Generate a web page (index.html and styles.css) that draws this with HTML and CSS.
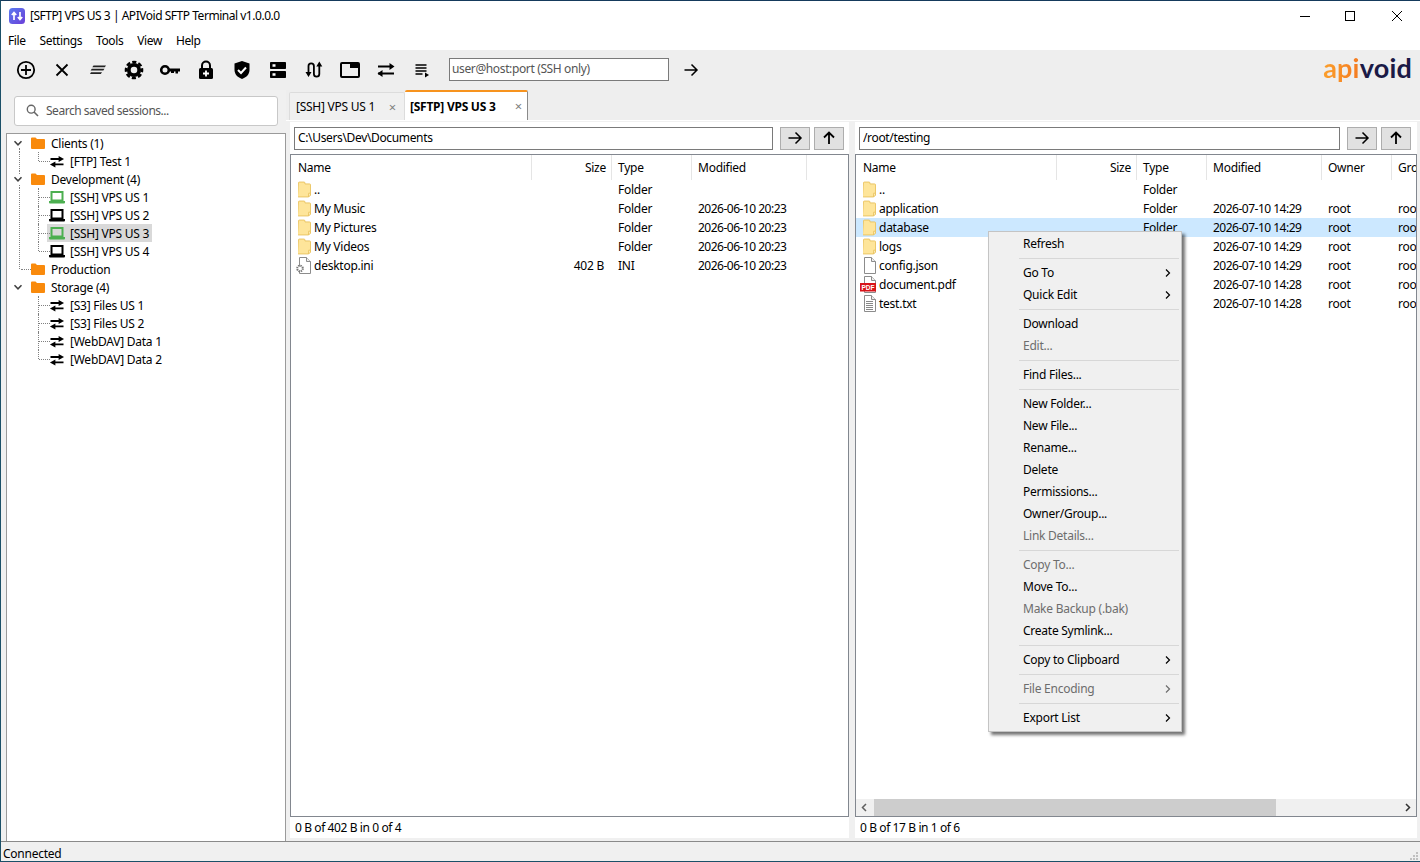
FILE: index.html
```html
<!DOCTYPE html>
<html lang="en">
<head>
    <meta charset="UTF-8">
    <title>[SFTP] VPS US 3 | APIVoid SFTP Terminal v1.0.0.0</title>
    <link rel="stylesheet" href="styles.css">
</head>
<body>
<svg class="sprite" width="0" height="0">
    <symbol id="folder" viewBox="0 0 14 12"><path d="M0 1.500Q0 .5 1 .5h3.500L6 2h7q1 0 1 1v8q0 1-1 1H1q-1 0-1-1z" fill="#f98a0c"/></symbol>
    <symbol id="swap" viewBox="0 0 14 12"><path d="M1 3.700h8M13 8.700H5" stroke="#000" stroke-width="1.700"/><path d="M8.500 .9l5 2.800-5 2.800zM5.500 5.900.5 8.700l5 2.800z"/></symbol>
    <symbol id="laptop" viewBox="0 0 16 13"><path d="M2.500 1h11v8.500h-11z" fill="none" stroke="currentColor" stroke-width="2"/><path d="M0 10h16v1.500q0 1-1 1H1q-1 0-1-1z" fill="currentColor"/></symbol>
    <symbol id="chev" viewBox="0 0 10 10"><path d="M1.500 3.200 5 6.800l3.500-3.600" fill="none" stroke="#404040" stroke-width="1.500"/></symbol>
    <symbol id="dir" viewBox="0 0 14 17"><path d="M.5 1.500q0-1 1-1h5q1 0 1 1v1h5q1 0 1 1v11h-2v2h-11q-1 0-1-1z" fill="#fee59a" stroke="#e9c35f"/><path d="M11.500 16.500v-4h2v2z" fill="#fff3c8" stroke="#e9c35f"/></symbol>
    <symbol id="page" viewBox="0 0 13 17"><path d="M1.500.5h7l4 4v12h-11z" fill="#fff" stroke="#8c8c8c"/><path d="M8.500.5v4h4" fill="#eee" stroke="#8c8c8c"/></symbol>
    <symbol id="right" viewBox="0 0 16 16"><path d="M1.500 8h12M8.500 2.500 14 8l-5.500 5.500" fill="none" stroke="currentColor" stroke-width="1.500"/></symbol>
    <symbol id="up" viewBox="0 0 16 16"><path d="M8 14V2.500M3 7.500 8 2.500l5 5" fill="none" stroke="currentColor" stroke-width="1.800"/></symbol>
    <symbol id="more" viewBox="0 0 6 10"><path d="M1 1.500 4.500 5 1 8.500" fill="none" stroke="currentColor" stroke-width="1.200"/></symbol>
</svg>

<div class="window">
    <div class="titlebar">
        <svg class="app-icon" width="16" height="16" viewBox="0 0 16 16"><defs><linearGradient id="appbg" x1="0" y1="0" x2="1" y2="1"><stop offset="0" stop-color="#5a7bf0"/><stop offset="1" stop-color="#6a3fd8"/></linearGradient></defs><rect width="16" height="16" rx="3.500" fill="url(#appbg)"/><path d="M5 12V5M2.800 7 5 4.500 7.200 7M11 4v7M8.800 9 11 11.500 13.200 9" fill="none" stroke="#fff" stroke-width="1.700"/></svg>
        <span class="title">[SFTP] VPS US 3 | APIVoid SFTP Terminal v1.0.0.0</span>
        <div class="winbtns">
            <svg width="46" height="30" viewBox="0 0 46 30"><path d="M18 15.500h10" stroke="#000"/></svg>
            <svg width="46" height="30" viewBox="0 0 46 30"><rect x="17.500" y="10.500" width="9" height="9" fill="none" stroke="#000"/></svg>
            <svg width="46" height="30" viewBox="0 0 46 30"><path d="M18 10l10 10M28 10 18 20" stroke="#000"/></svg>
        </div>
    </div>
    <div class="menubar">
        <span>File</span><span>Settings</span><span>Tools</span><span>View</span><span>Help</span>
    </div>
    <div class="toolbar">
        <button class="tool"><svg width="20" height="20" viewBox="0 0 20 20"><circle cx="10" cy="10" r="8.200" fill="none" stroke="#000" stroke-width="1.800"/><path d="M10 5v10M5 10h10" stroke="#000" stroke-width="1.800"/></svg></button>
        <button class="tool"><svg width="20" height="20" viewBox="0 0 20 20"><path d="M4.500 4.500l11 11M15.500 4.500l-11 11" stroke="#000" stroke-width="1.800"/></svg></button>
        <button class="tool"><svg width="20" height="20" viewBox="0 0 20 20"><path d="M5.500 5.500H18l-1.200 1.800H4.300zM3.800 8.800H16.500l-1.200 1.800H2.600zM3 12.200h11l-1.200 1.800H2z" fill="#222"/></svg></button>
        <button class="tool"><svg width="20" height="20" viewBox="0 0 20 20"><circle cx="10" cy="10" r="5.200" fill="none" stroke="#000" stroke-width="3.800"/><circle cx="10" cy="10" r="8" fill="none" stroke="#000" stroke-width="2.600" stroke-dasharray="4.100 2.180" stroke-dashoffset="2"/></svg></button>
        <button class="tool"><svg width="22" height="20" viewBox="0 0 22 20"><circle cx="6" cy="10" r="3.800" fill="none" stroke="#000" stroke-width="2.600"/><path d="M9 8.500h12v3h-2v2h-2.500v-2h-1.500v1.500H12v-1.500H9z"/></svg></button>
        <button class="tool"><svg width="20" height="20" viewBox="0 0 20 20"><path d="M6 9V5.500a4 4 0 0 1 8 0V9" fill="none" stroke="#000" stroke-width="2"/><rect x="3" y="8" width="14" height="11" rx="1.500"/><path d="M10 10.500v6M7 13.500h6" stroke="#fff" stroke-width="1.800"/></svg></button>
        <button class="tool"><svg width="20" height="20" viewBox="0 0 20 20"><path d="M10 1l7.500 2.500V10c0 4.500-3.500 7.500-7.500 9-4-1.500-7.500-4.500-7.500-9V3.500z"/><path d="M6 10l3 3 5-5.500" fill="none" stroke="#fff" stroke-width="2"/></svg></button>
        <button class="tool"><svg width="20" height="20" viewBox="0 0 20 20"><rect x="2" y="2" width="16" height="7" rx=".8"/><rect x="2" y="11" width="16" height="7" rx=".8"/><path d="M4.500 4.300h3v2.400h-3zM4.500 13.300h3v2.400h-3z" fill="#fff"/></svg></button>
        <button class="tool"><svg width="20" height="20" viewBox="0 0 20 20"><path d="M4.500 13V6a2.700 2.700 0 0 1 5.400 0v8a2.700 2.700 0 0 0 5.400 0V6" fill="none" stroke="#000" stroke-width="1.800"/><path d="M1.500 12h6l-3 5zM12.300 6.500h6l-3-5z"/></svg></button>
        <button class="tool"><svg width="22" height="20" viewBox="0 0 22 20"><rect x="2" y="3" width="18" height="14" rx="1" fill="none" stroke="#000" stroke-width="2"/><path d="M11 3h9v5h-9z"/></svg></button>
        <button class="tool"><svg width="20" height="20" viewBox="0 0 20 20"><path d="M2 6.500h13M2 13.500h16" stroke="#000" stroke-width="2"/><path d="M13.500 3l5 3.500-5 3.500zM6.500 10l-5 3.500 5 3.500z"/></svg></button>
        <button class="tool"><svg width="20" height="20" viewBox="0 0 20 20"><path d="M3.500 5h11M3.500 8h11M3.500 11h11M3.500 14h7" stroke="#000" stroke-width="1.600"/><path d="M13 12.500l4 2.500-4 2.500z"/></svg></button>
        <input class="quick" type="text" value="user@host:port (SSH only)">
        <button class="go"><svg width="16" height="16"><use href="#right"/></svg></button>
        <div class="logo"><span class="logo-api">api</span><span class="logo-void">void</span></div>
    </div>

    <div class="main">
        <div class="sidebar">
            <div class="search">
                <svg width="13" height="13" viewBox="0 0 13 13"><circle cx="5.200" cy="5.200" r="3.900" fill="none" stroke="#666" stroke-width="1.400"/><path d="M8 8l4 4" stroke="#666" stroke-width="1.600"/></svg>
                <span>Search saved sessions...</span>
            </div>
            <div class="tree">
                <div class="node root first"><svg class="twist"><use href="#chev"/></svg><svg class="fold"><use href="#folder"/></svg><span>Clients (1)</span></div>
                <div class="node child pass last"><svg class="leaf"><use href="#swap"/></svg><span>[FTP] Test 1</span></div>
                <div class="node root"><svg class="twist"><use href="#chev"/></svg><svg class="fold"><use href="#folder"/></svg><span>Development (4)</span></div>
                <div class="node child pass"><svg class="leaf green"><use href="#laptop"/></svg><span>[SSH] VPS US 1</span></div>
                <div class="node child pass"><svg class="leaf"><use href="#laptop"/></svg><span>[SSH] VPS US 2</span></div>
                <div class="node child pass"><span class="picked"></span><svg class="leaf green"><use href="#laptop"/></svg><span>[SSH] VPS US 3</span></div>
                <div class="node child pass last"><svg class="leaf"><use href="#laptop"/></svg><span>[SSH] VPS US 4</span></div>
                <div class="node root flat"><svg class="fold"><use href="#folder"/></svg><span>Production</span></div>
                <div class="node root end"><svg class="twist"><use href="#chev"/></svg><svg class="fold"><use href="#folder"/></svg><span>Storage (4)</span></div>
                <div class="node child"><svg class="leaf"><use href="#swap"/></svg><span>[S3] Files US 1</span></div>
                <div class="node child"><svg class="leaf"><use href="#swap"/></svg><span>[S3] Files US 2</span></div>
                <div class="node child"><svg class="leaf"><use href="#swap"/></svg><span>[WebDAV] Data 1</span></div>
                <div class="node child last"><svg class="leaf"><use href="#swap"/></svg><span>[WebDAV] Data 2</span></div>
            </div>
        </div>

        <div class="content">
            <div class="tabs">
                <div class="tab"><span>[SSH] VPS US 1</span><i>×</i></div>
                <div class="tab active"><span>[SFTP] VPS US 3</span><i>×</i></div>
            </div>
            <div class="panes">
                <div class="pane local">
                    <div class="pathbar">
                        <input class="path" type="text" value="C:\Users\Dev\Documents">
                        <button class="navbtn"><svg width="16" height="16"><use href="#right"/></svg></button>
                        <button class="navbtn"><svg width="16" height="16"><use href="#up"/></svg></button>
                    </div>
                    <div class="list">
                        <div class="scroll">
                            <div class="row head"><span>Name</span><span class="num">Size</span><span>Type</span><span>Modified</span></div>
                            <div class="row"><span class="name"><svg class="ico"><use href="#dir"/></svg>..</span><span></span><span>Folder</span><span></span></div>
                            <div class="row"><span class="name"><svg class="ico"><use href="#dir"/></svg>My Music</span><span></span><span>Folder</span><span>2026-06-10 20:23</span></div>
                            <div class="row"><span class="name"><svg class="ico"><use href="#dir"/></svg>My Pictures</span><span></span><span>Folder</span><span>2026-06-10 20:23</span></div>
                            <div class="row"><span class="name"><svg class="ico"><use href="#dir"/></svg>My Videos</span><span></span><span>Folder</span><span>2026-06-10 20:23</span></div>
                            <div class="row"><span class="name"><svg class="ico wide" viewBox="0 0 16 17"><use href="#page" width="13" height="17" x="3"/><circle cx="5" cy="11.500" r="2.800" fill="#fff" stroke="#777" stroke-width="2" stroke-dasharray="1.400 .8"/></svg>desktop.ini</span><span class="num val">402 B</span><span>INI</span><span>2026-06-10 20:23</span></div>
                        </div>
                    </div>
                    <div class="summary">0 B of 402 B in 0 of 4</div>
                </div>
                <div class="pane remote">
                    <div class="pathbar">
                        <input class="path" type="text" value="/root/testing">
                        <button class="navbtn"><svg width="16" height="16"><use href="#right"/></svg></button>
                        <button class="navbtn"><svg width="16" height="16"><use href="#up"/></svg></button>
                    </div>
                    <div class="list">
                        <div class="scroll">
                            <div class="row head"><span>Name</span><span class="num">Size</span><span>Type</span><span>Modified</span><span>Owner</span><span>Group</span></div>
                            <div class="row"><span class="name"><svg class="ico"><use href="#dir"/></svg>..</span><span></span><span>Folder</span><span></span><span></span><span></span></div>
                            <div class="row"><span class="name"><svg class="ico"><use href="#dir"/></svg>application</span><span></span><span>Folder</span><span>2026-07-10 14:29</span><span>root</span><span>root</span></div>
                            <div class="row sel"><span class="name"><svg class="ico"><use href="#dir"/></svg>database</span><span></span><span>Folder</span><span>2026-07-10 14:29</span><span>root</span><span>root</span></div>
                            <div class="row"><span class="name"><svg class="ico"><use href="#dir"/></svg>logs</span><span></span><span>Folder</span><span>2026-07-10 14:29</span><span>root</span><span>root</span></div>
                            <div class="row"><span class="name"><svg class="ico"><use href="#page"/></svg>config.json</span><span></span><span></span><span>2026-07-10 14:29</span><span>root</span><span>root</span></div>
                            <div class="row"><span class="name"><svg class="ico wide" viewBox="0 0 16 17"><use href="#page" width="13" height="17" x="3"/><rect y="7" width="16" height="8.500" fill="#d8141a"/><text x="8" y="13.800" class="pdf">PDF</text></svg>document.pdf</span><span></span><span></span><span>2026-07-10 14:28</span><span>root</span><span>root</span></div>
                            <div class="row"><span class="name"><svg class="ico"><use href="#page"/><path d="M3 6.500h7M3 8.500h7M3 10.500h7M3 12.500h7M3 14.500h7" stroke="#888"/></svg>test.txt</span><span></span><span></span><span>2026-07-10 14:28</span><span>root</span><span>root</span></div>
                        </div>
                        <div class="hscroll">
                            <svg width="18" height="17" viewBox="0 0 18 17"><path d="M10 5 6.500 8.500 10 12" fill="none" stroke="#606060" stroke-width="1.500"/></svg>
                            <div class="track"><div class="thumb"></div></div>
                            <svg width="17" height="17" viewBox="0 0 17 17"><path d="M7 5l3.500 3.500L7 12" fill="none" stroke="#333" stroke-width="1.500"/></svg>
                        </div>
                    </div>
                    <div class="summary">0 B of 17 B in 1 of 6</div>
                </div>
            </div>
        </div>
    </div>

    <div class="statusbar">
        <span>Connected</span>
        <svg class="grip" width="10" height="10" viewBox="0 0 10 10"><path d="M7 1h2v2H7zM4 4h2v2H4zM7 4h2v2H7zM1 7h2v2H1zM4 7h2v2H4zM7 7h2v2H7z" fill="#c0c0c0"/></svg>
    </div>

    <div class="ctxmenu">
        <div class="mi">Refresh</div>
        <div class="sep"></div>
        <div class="mi">Go To<svg class="sub"><use href="#more"/></svg></div>
        <div class="mi">Quick Edit<svg class="sub"><use href="#more"/></svg></div>
        <div class="sep"></div>
        <div class="mi">Download</div>
        <div class="mi off">Edit...</div>
        <div class="sep"></div>
        <div class="mi">Find Files...</div>
        <div class="sep"></div>
        <div class="mi">New Folder...</div>
        <div class="mi">New File...</div>
        <div class="mi">Rename...</div>
        <div class="mi">Delete</div>
        <div class="mi">Permissions...</div>
        <div class="mi">Owner/Group...</div>
        <div class="mi off">Link Details...</div>
        <div class="sep"></div>
        <div class="mi off">Copy To...</div>
        <div class="mi">Move To...</div>
        <div class="mi off">Make Backup (.bak)</div>
        <div class="mi">Create Symlink...</div>
        <div class="sep"></div>
        <div class="mi">Copy to Clipboard<svg class="sub"><use href="#more"/></svg></div>
        <div class="sep"></div>
        <div class="mi off">File Encoding<svg class="sub"><use href="#more"/></svg></div>
        <div class="sep"></div>
        <div class="mi">Export List<svg class="sub"><use href="#more"/></svg></div>
    </div>
</div>
</body>
</html>
```

FILE: styles.css
```css
html, body {
    margin: 0;
    height: 100%;
    overflow: hidden;
}
body, input, button {
    font-family: "Noto Sans", "Open Sans", sans-serif;
    font-size: 12px;
    letter-spacing: -0.25px;
    color: #000;
}
.sprite {
    position: absolute;
}
.window {
    position: relative;
    box-sizing: border-box;
    display: flex;
    flex-direction: column;
    height: 862px;
    background-color: #f0f0f0;
    border-top: 1px solid #153a5c;
    border-left: 1px solid #1b5068;
    border-bottom: 1px solid #1b5068;
}

/* Title and menu */
.titlebar {
    display: flex;
    align-items: center;
    height: 29px;
    flex: none;
    background-color: #fff;
}
.app-icon {
    margin-left: 8px;
}
.title {
    margin-left: 5px;
    letter-spacing: -0.47px;
}
.winbtns {
    display: flex;
    margin-left: auto;
}
.menubar {
    display: flex;
    align-items: center;
    gap: 14px;
    height: 20px;
    flex: none;
    padding-left: 7px;
    background-color: #fff;
    letter-spacing: -0.4px;
}

/* Toolbar */
.toolbar {
    display: flex;
    align-items: center;
    height: 40px;
    flex: none;
    padding-left: 7px;
    background-color: #eeeeee;
}
.tool {
    display: flex;
    align-items: center;
    justify-content: center;
    width: 36px;
    height: 30px;
    padding: 0;
    border: none;
    background: none;
}
.quick {
    box-sizing: border-box;
    width: 220px;
    height: 23px;
    margin-left: 9px;
    margin-bottom: 2px;
    padding: 0 2px 1px;
    border: 1px solid #7a7a7a;
    border-radius: 0;
    background-color: #fff;
    color: #555;
    letter-spacing: -0.37px;
    outline: none;
}
.go {
    display: flex;
    align-items: center;
    justify-content: center;
    width: 44px;
    height: 30px;
    padding: 0;
    border: none;
    background: none;
}
.logo {
    margin-left: auto;
    margin-right: 8px;
    margin-top: -5px;
    font-family: Lato, sans-serif;
    font-size: 27px;
    font-weight: 700;
    letter-spacing: 0.2px;
    line-height: 30px;
}
.logo-api {
    background-image: linear-gradient(90deg, #fb9f2c, #f47a20);
    -webkit-background-clip: text;
    background-clip: text;
    color: transparent;
}
.logo-void {
    color: #1b1a46;
}

/* Main */
.main {
    display: flex;
    flex: 1;
    min-height: 0;
}
.sidebar {
    display: flex;
    flex-direction: column;
    flex: none;
    width: 285px;
}
.search {
    display: flex;
    align-items: center;
    gap: 7px;
    box-sizing: border-box;
    height: 30px;
    margin: 6px 8px 7px 13px;
    padding: 0 0 2px 11px;
    background-color: #fff;
    border: 1px solid #c8c8c8;
    border-radius: 3px;
    color: #555;
    letter-spacing: -0.47px;
}
.tree {
    flex: 1;
    margin-left: 5px;
    background-color: #fff;
    border: 1px solid #9a9a9a;
    border-bottom: none;
}
.node {
    position: relative;
    display: flex;
    align-items: center;
    height: 18px;
}
.root::before {
    content: "";
    position: absolute;
    left: 12px;
    top: 0;
    height: 18px;
    border-left: 1px dotted #808080;
}
.root.first::before {
    top: 14px;
    height: 4px;
}
.root.end::before {
    display: none;
}
.root.flat::before {
    height: 9px;
}
.root.flat::after {
    content: "";
    position: absolute;
    left: 14px;
    top: 9px;
    width: 10px;
    border-top: 1px dotted #808080;
}
.twist {
    position: absolute;
    left: 6px;
    top: 4px;
    width: 10px;
    height: 10px;
    background-color: #fff;
}
.fold {
    width: 14px;
    height: 12px;
    margin-left: 24px;
    margin-right: 6px;
}
.child::before {
    content: "";
    position: absolute;
    left: 31px;
    top: 0;
    height: 18px;
    border-left: 1px dotted #808080;
}
.child.last::before {
    height: 9px;
}
.child::after {
    content: "";
    position: absolute;
    left: 32px;
    top: 9px;
    width: 11px;
    border-top: 1px dotted #808080;
}
.pass {
    background-image: linear-gradient(#808080 50%, transparent 50%);
    background-size: 1px 2px;
    background-repeat: repeat-y;
    background-position: 12px 0;
}
.leaf {
    position: relative;
    z-index: 1;
    flex: none;
    width: 16px;
    height: 13px;
    margin-left: 42px;
    margin-right: 5px;
    color: #000;
}
.node > span {
    position: relative;
    z-index: 1;
}
.green {
    color: #4caf50;
}
.node > .picked {
    position: absolute;
    z-index: 0;
    left: 40px;
    top: 0;
    width: 105px;
    height: 18px;
    background-color: #d9d9d9;
}

/* Tabs */
.content {
    display: flex;
    flex-direction: column;
    flex: 1;
    min-width: 0;
}
.tabs {
    display: flex;
    align-items: flex-end;
    box-sizing: border-box;
    height: 31px;
    flex: none;
    padding-left: 3px;
    background-color: #eeeeee;
    border-bottom: 1px solid #fff;
}
.tab {
    display: flex;
    align-items: center;
    justify-content: space-between;
    box-sizing: border-box;
    width: 116px;
    height: 28px;
    padding: 0 8px 0 6px;
    background-color: #f0f0f0;
    border: 1px solid #dcdcdc;
    border-bottom: none;
    border-radius: 2px 2px 0 0;
}
.tab i {
    font-style: normal;
    font-size: 13px;
    color: #808080;
}
.tab.active {
    width: 123px;
    height: 30px;
    padding: 0 5px;
    background-color: #fff;
    border: none;
    border-top: 2px solid #f7931e;
    border-right: 1px solid #8a8a8a;
    font-weight: 700;
}
.tab.active i {
    font-weight: 400;
}

/* File panes */
.panes {
    display: flex;
    flex: 1;
    min-height: 0;
    gap: 6px;
    padding: 1px 3px 3px 4px;
}
.pane {
    display: flex;
    flex-direction: column;
    min-width: 0;
    background-color: #fff;
}
.local {
    width: 559px;
    flex: none;
}
.remote {
    flex: 1;
}
.pathbar {
    display: flex;
    align-items: center;
    height: 32px;
    flex: none;
    gap: 4px;
    padding: 0 5px 0 4px;
}
.remote .pathbar {
    padding: 0 6px 0 4px;
}
.path {
    flex: 1;
    min-width: 0;
    box-sizing: border-box;
    height: 23px;
    margin-right: 3px;
    padding: 0 3px 2px;
    border: 1px solid #7a7a7a;
    border-radius: 0;
    letter-spacing: -0.35px;
    outline: none;
}
.navbtn {
    display: flex;
    align-items: center;
    justify-content: center;
    width: 30px;
    height: 23px;
    padding: 0;
    background-color: #e1e1e1;
    border: 1px solid #adadad;
}
.list {
    display: flex;
    flex-direction: column;
    flex: 1;
    min-height: 0;
    border: 1px solid #82878f;
    overflow: hidden;
}
.scroll {
    flex: 1;
    min-height: 0;
    overflow: hidden;
}
.row {
    display: grid;
    align-items: center;
    height: 19px;
    line-height: 19px;
    white-space: nowrap;
}
.local .row {
    grid-template-columns: 240px 80px 80px 115px;
}
.remote .row {
    grid-template-columns: 200px 80px 70px 115px 70px 80px;
    width: 615px;
}
.row > span {
    display: block;
    padding-left: 7px;
    overflow: hidden;
}
.row > span:nth-child(4) {
    letter-spacing: -0.5px;
}
.row.head > span:nth-child(4) {
    letter-spacing: -0.25px;
}
.row.head {
    height: 25px;
    line-height: 25px;
}
.row.head > span {
    height: 25px;
    box-shadow: 1px 0 0 #e5e5e5;
    box-sizing: border-box;
}
.row > .num {
    padding-left: 0;
    padding-right: 5px;
    text-align: right;
}
.row > .val {
    padding-right: 7px;
}
.row > .name {
    display: flex;
    align-items: center;
    gap: 3px;
    padding-left: 7px;
}
.ico {
    flex: none;
    width: 13px;
    height: 17px;
}
.ico.wide {
    width: 16px;
    margin-left: -3px;
}
.row.sel {
    background-color: #cce8ff;
}
.pdf {
    font-family: "Liberation Sans", sans-serif;
    font-size: 6.500px;
    font-weight: 700;
    letter-spacing: 0;
    fill: #fff;
    text-anchor: middle;
}
.hscroll {
    display: flex;
    flex: none;
    height: 17px;
    background-color: #f0f0f0;
}
.track {
    flex: 1;
}
.thumb {
    width: 402px;
    height: 17px;
    background-color: #cdcdcd;
}
.summary {
    display: flex;
    align-items: center;
    height: 21px;
    flex: none;
    padding-left: 5px;
    letter-spacing: -0.4px;
}

/* Status */
.statusbar {
    display: flex;
    align-items: flex-end;
    height: 19px;
    flex: none;
    padding-left: 2px;
    background-color: #f0f0f0;
    border-top: 1px solid #8a8a8a;
    line-height: 14px;
}
.grip {
    margin-left: auto;
    margin-right: 1px;
}

/* Context menu */
.ctxmenu {
    position: absolute;
    left: 987px;
    top: 230px;
    box-sizing: border-box;
    width: 194px;
    height: 501px;
    padding: 1px 2px;
    background-color: #f0f0f0;
    border: 1px solid #c4c4c4;
    box-shadow: 3px 3px 3px rgba(0, 0, 0, 0.55);
}
.mi {
    position: relative;
    height: 22px;
    line-height: 21px;
    padding-left: 32px;
}
.off {
    color: #6d6d6d;
}
.sep {
    height: 1px;
    margin: 3px 0 3px 28px;
    background-color: #d7d7d7;
}
.sub {
    position: absolute;
    right: 8px;
    top: 6px;
    width: 6px;
    height: 10px;
}
```
